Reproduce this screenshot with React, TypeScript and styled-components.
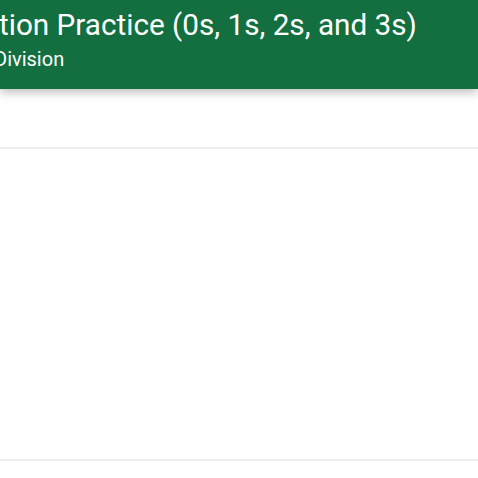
import React from "react";
import styled, { createGlobalStyle } from "styled-components";

const Global = createGlobalStyle`
  html, body { margin: 0; padding: 0; background: #ffffff; overflow: hidden; }
  body { font-family: Roboto, "Noto Sans", "Liberation Sans", sans-serif; }
`;

const Page = styled.div`
  width: 478px;
  height: 478px;
  overflow: hidden;
  display: flex;
  flex-direction: column;
  background: #ffffff;
`;

const Header = styled.header`
  height: 89px;
  flex: none;
  background: #136f3f;
  color: #ffffff;
  box-shadow: 0 3px 10px rgba(0, 0, 0, 0.28);
  position: relative;
  z-index: 1;
  display: flex;
  flex-direction: column;
  padding-top: 7px;
  box-sizing: border-box;
  overflow: hidden;
`;

const Title = styled.h1`
  margin: 0 0 0 -1px;
  font-size: 29.7px;
  font-weight: 400;
  line-height: 36px;
  white-space: nowrap;
`;

const Subtitle = styled.div<{ $shift: number }>`
  margin: 3px 0 0 ${(p) => p.$shift}px;
  font-size: 20px;
  font-weight: 400;
  line-height: 26px;
  white-space: nowrap;
`;

const Body = styled.main`
  flex: 1;
  display: flex;
  flex-direction: column;
  padding-top: 58px;
`;

const Divider = styled.div`
  height: 2px;
  background: #eeeeee;
  flex: none;
`;

const Blank = styled.div<{ $h: number }>`
  height: ${(p) => p.$h}px;
  flex: none;
`;

export default function App() {
  return (
    <Page>
      <Global />
      <Header>
        <Title>tion Practice (0s, 1s, 2s, and 3s)</Title>
        <Subtitle $shift={-6}>Division</Subtitle>
      </Header>
      <Body>
        <Divider />
        <Blank $h={310} />
        <Divider />
      </Body>
    </Page>
  );
}
